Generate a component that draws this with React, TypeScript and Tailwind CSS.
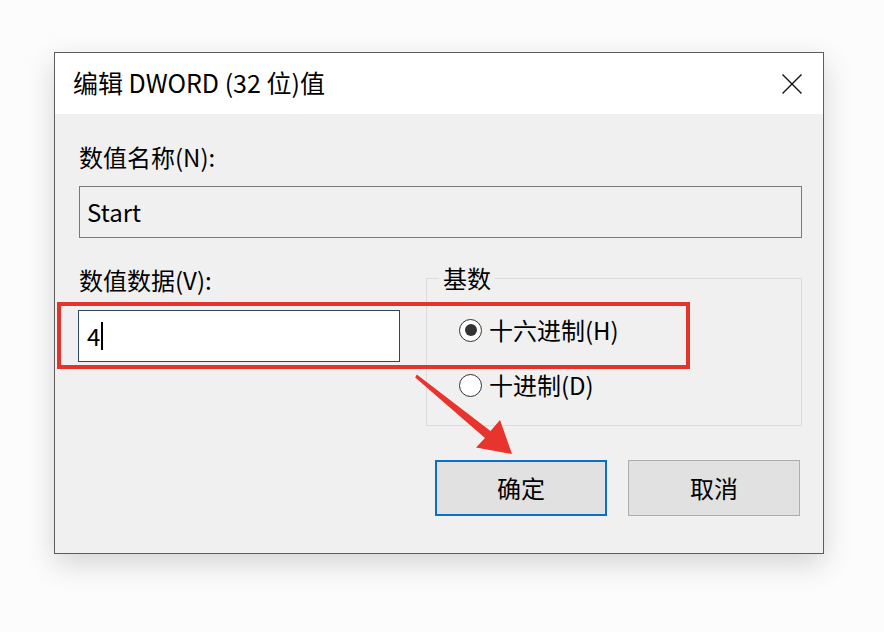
import React from 'react'

const font = { fontFamily: '"Noto Sans CJK SC", "Microsoft YaHei", sans-serif' }

function Radio({ checked, label }: { checked?: boolean; label: string }) {
  return (
    <div className="flex items-center h-[30px]">
      <span className="w-[23px] h-[23px] rounded-full border-[1.5px] border-[#333] bg-white flex items-center justify-center">
        {checked && <span className="w-[12px] h-[12px] rounded-full bg-[#333]" />}
      </span>
      <span className="ml-[7px] text-[24px] leading-[30px] text-black">{label}</span>
    </div>
  )
}

export default function App() {
  return (
    <div className="relative w-[884px] h-[632px] bg-[#fcfcfd] pt-[52px] pl-[54px] overflow-hidden" style={font}>
      <div className="w-[770px] h-[502px] border border-[#5c5c5c] bg-[#f0f0f0] flex flex-col shadow-[0_10px_28px_rgba(0,0,0,0.16)]">
        {/* title bar */}
        <div className="h-[61px] bg-white flex items-center justify-between pl-[18px] pr-[20px]">
          <span className="-mt-[3px] text-[25px] leading-[30px] text-black">编辑 DWORD (32 位)值</span>
          <svg width="22" height="22" viewBox="0 0 22 22">
            <path d="M1.5 1.5 L20.5 20.5 M20.5 1.5 L1.5 20.5" stroke="#111" strokeWidth="1.4" fill="none" />
          </svg>
        </div>

        {/* body */}
        <div className="flex-1 flex flex-col pl-[24px] pr-[21px] pt-[28px]">
          <div className="text-[24px] leading-[30px] text-black">数值名称(N):</div>
          <div className="mt-[14px] h-[52px] border border-[#7a7a7a] bg-[#f0f0f0] flex items-center pl-[7px] text-[24px] text-black">
            Start
          </div>

          <div className="mt-[25px] flex">
            <div className="w-[322px] pt-[2px] -ml-px">
              <div className="pl-px text-[24px] leading-[30px] text-black">数值数据(V):</div>
              <div className="mt-[15px] h-[52px] border border-[#2c4763] bg-white flex items-center pl-[8px] text-[24px] text-black">
                <span>4</span>
                <span className="ml-[1px] w-[1.5px] h-[28px] bg-black" />
              </div>
            </div>

            <fieldset className="ml-[26px] flex-1 h-[163px] border border-[#dcdcdc] pl-[12px] pt-[22px]">
              <legend className="px-[4px] text-[24px] leading-[30px] text-black">基数</legend>
              <div className="pl-[20px] flex flex-col gap-[25px]">
                <Radio checked label="十六进制(H)" />
                <Radio label="十进制(D)" />
              </div>
            </fieldset>
          </div>

          <div className="mt-[34px] flex justify-end gap-[21px] mr-[2px]">
            <button className="w-[172px] h-[56px] border-2 border-[#0a6fc8] bg-[#e1e1e1] text-[24px] text-black">
              确定
            </button>
            <button className="w-[172px] h-[56px] border border-[#adadad] bg-[#e1e1e1] text-[24px] text-black">
              取消
            </button>
          </div>
        </div>
      </div>

      {/* annotations */}
      <div className="absolute left-[57px] top-[302px] w-[633px] h-[67px] border-4 border-[#e2332f]" />
      <svg className="absolute left-0 top-0" width="884" height="632" viewBox="0 0 884 632">
        <polygon
          points="415.2,377.6 485,438 476,447.5 512,454 500,420 490.5,431 416.8,374.4"
          fill="#e8342c"
        />
      </svg>
    </div>
  )
}
